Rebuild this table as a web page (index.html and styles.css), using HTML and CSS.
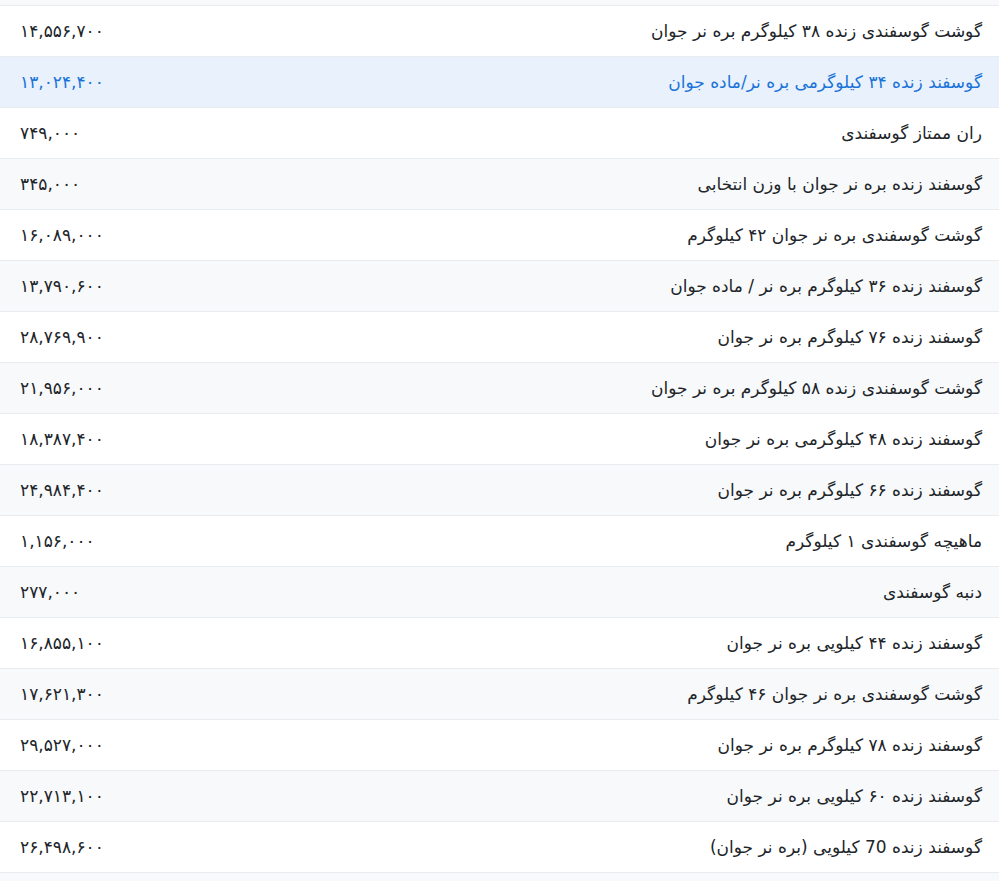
FILE: index.html
```html
<!DOCTYPE html>
<html lang="fa" dir="rtl">
<head>
<meta charset="utf-8">
<title>قیمت گوسفند</title>
<link rel="stylesheet" href="styles.css">
</head>
<body>
<table class="prices">
<tbody>
<tr class="stub"><td class="name"></td><td class="price"></td></tr>
<tr><td class="name">گوشت گوسفندی زنده ۳۸ کیلوگرم بره نر جوان</td><td class="price">۱۴,۵۵۶,۷۰۰</td></tr>
<tr class="hover"><td class="name">گوسفند زنده ۳۴ کیلوگرمی بره نر/ماده جوان</td><td class="price">۱۳,۰۲۴,۴۰۰</td></tr>
<tr><td class="name">ران ممتاز گوسفندی</td><td class="price">۷۴۹,۰۰۰</td></tr>
<tr><td class="name">گوسفند زنده بره نر جوان با وزن انتخابی</td><td class="price">۳۴۵,۰۰۰</td></tr>
<tr><td class="name">گوشت گوسفندی بره نر جوان ۴۲ کیلوگرم</td><td class="price">۱۶,۰۸۹,۰۰۰</td></tr>
<tr><td class="name">گوسفند زنده ۳۶ کیلوگرم بره نر / ماده جوان</td><td class="price">۱۳,۷۹۰,۶۰۰</td></tr>
<tr><td class="name">گوسفند زنده ۷۶ کیلوگرم بره نر جوان</td><td class="price">۲۸,۷۶۹,۹۰۰</td></tr>
<tr><td class="name">گوشت گوسفندی زنده ۵۸ کیلوگرم بره نر جوان</td><td class="price">۲۱,۹۵۶,۰۰۰</td></tr>
<tr><td class="name">گوسفند زنده ۴۸ کیلوگرمی بره نر جوان</td><td class="price">۱۸,۳۸۷,۴۰۰</td></tr>
<tr><td class="name">گوسفند زنده ۶۶ کیلوگرم بره نر جوان</td><td class="price">۲۴,۹۸۴,۴۰۰</td></tr>
<tr><td class="name">ماهیچه گوسفندی ۱ کیلوگرم</td><td class="price">۱,۱۵۶,۰۰۰</td></tr>
<tr><td class="name">دنبه گوسفندی</td><td class="price">۲۷۷,۰۰۰</td></tr>
<tr><td class="name">گوسفند زنده ۴۴ کیلویی بره نر جوان</td><td class="price">۱۶,۸۵۵,۱۰۰</td></tr>
<tr><td class="name">گوشت گوسفندی بره نر جوان ۴۶ کیلوگرم</td><td class="price">۱۷,۶۲۱,۳۰۰</td></tr>
<tr><td class="name">گوسفند زنده ۷۸ کیلوگرم بره نر جوان</td><td class="price">۲۹,۵۲۷,۰۰۰</td></tr>
<tr><td class="name">گوسفند زنده ۶۰ کیلویی بره نر جوان</td><td class="price">۲۲,۷۱۳,۱۰۰</td></tr>
<tr><td class="name">گوسفند زنده 70 کیلویی (بره نر جوان)</td><td class="price">۲۶,۴۹۸,۶۰۰</td></tr>
<tr><td class="name">&nbsp;</td><td class="price">&nbsp;</td></tr>
</tbody>
</table>
</body>
</html>
```
FILE: styles.css
```css
html, body {
  margin: 0;
  padding: 0;
  background: #ffffff;
}
body {
  font-family: "DejaVu Sans", "Noto Sans", sans-serif;
  font-size: 17px;
  color: #212529;
}
.prices {
  width: 100%;
  border-collapse: collapse;
}
.prices td {
  height: 50px;
  padding: 0;
  border-top: 1px solid #e9ecef;
  vertical-align: middle;
  white-space: nowrap;
}
.prices tr:nth-child(odd) td {
  background: #f8f9fb;
}
.prices tr.stub td {
  height: 5px;
  border-top: 0;
}
.prices tr.hover td {
  background: #e8f1fc;
  color: #1a73d9;
}
.name {
  text-align: right;
  padding-right: 17px !important;
}
.price {
  width: 200px;
  text-align: left;
  padding-left: 20px !important;
}
```
